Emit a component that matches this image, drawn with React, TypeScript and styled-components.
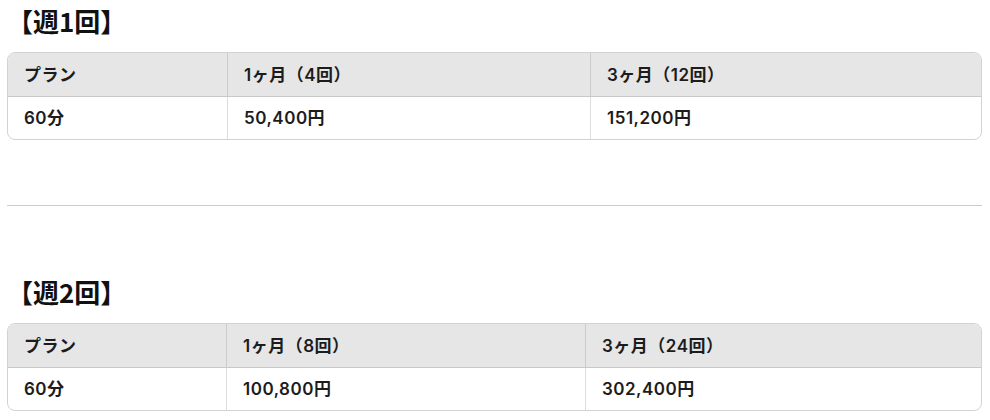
import React from "react";
import styled, { createGlobalStyle } from "styled-components";

const GlobalStyle = createGlobalStyle`
  html, body { margin: 0; padding: 0; background: #ffffff; }
  body {
    font-family: Inter, "Noto Sans CJK JP", sans-serif;
    color: #1c1c1c;
  }
`;

const Page = styled.main`
  width: 975px;
  padding: 0 8px 0 7px;
  box-sizing: content-box;
`;

const Section = styled.section`
  display: flex;
  flex-direction: column;
`;

const Title = styled.h3`
  margin: 0;
  padding: 3px 0 0 0;
  height: 52px;
  box-sizing: border-box;
  font-family: "Noto Sans CJK JP", sans-serif;
  font-size: 26px;
  line-height: 36px;
  font-weight: 700;
  color: #111;
`;

const TableFrame = styled.div`
  border: 1px solid #d2d2d2;
  border-radius: 8px;
  overflow: hidden;
`;

const Table = styled.table`
  width: 100%;
  border-collapse: separate;
  border-spacing: 0;
  table-layout: fixed;
`;

const HeadCell = styled.th`
  background: #e6e6e6;
  text-align: left;
  font-size: 17px;
  font-weight: 600;
  line-height: 24px;
  letter-spacing: 0.5px;
  padding: 10px 16px 9px;
  border-bottom: 1px solid #c9c9c9;
  color: #1c1c1c;
  & + & { border-left: 1px solid #cccccc; }
`;

const BodyCell = styled.td`
  font-size: 17px;
  font-weight: 600;
  line-height: 24px;
  letter-spacing: 0.5px;
  padding: 9px 16px 9px;
  color: #1c1c1c;
  & + & { border-left: 1px solid #dcdcdc; }
`;

const Divider = styled.hr`
  margin: 65px 0 65px;
  border: 0;
  border-top: 1px solid #cccccc;
  height: 0;
`;

type Plan = {
  title: string;
  widths: number[];
  head: string[];
  row: string[];
};

const plans: Plan[] = [
  {
    title: "【週1回】",
    widths: [219, 363, 392],
    head: ["プラン", "1ヶ月（4回）", "3ヶ月（12回）"],
    row: ["60分", "50,400円", "151,200円"],
  },
  {
    title: "【週2回】",
    widths: [218, 359, 397],
    head: ["プラン", "1ヶ月（8回）", "3ヶ月（24回）"],
    row: ["60分", "100,800円", "302,400円"],
  },
];

const PriceTable: React.FC<{ plan: Plan }> = ({ plan }) => (
  <Section>
    <Title>{plan.title}</Title>
    <TableFrame>
      <Table>
        <colgroup>
          {plan.widths.map((w, i) => (
            <col key={i} style={{ width: w }} />
          ))}
        </colgroup>
        <thead>
          <tr>
            {plan.head.map((h) => (
              <HeadCell key={h}>{h}</HeadCell>
            ))}
          </tr>
        </thead>
        <tbody>
          <tr>
            {plan.row.map((c) => (
              <BodyCell key={c}>{c}</BodyCell>
            ))}
          </tr>
        </tbody>
      </Table>
    </TableFrame>
  </Section>
);

export default function App() {
  return (
    <>
      <GlobalStyle />
      <Page>
        <PriceTable plan={plans[0]} />
        <Divider />
        <PriceTable plan={plans[1]} />
      </Page>
    </>
  );
}
